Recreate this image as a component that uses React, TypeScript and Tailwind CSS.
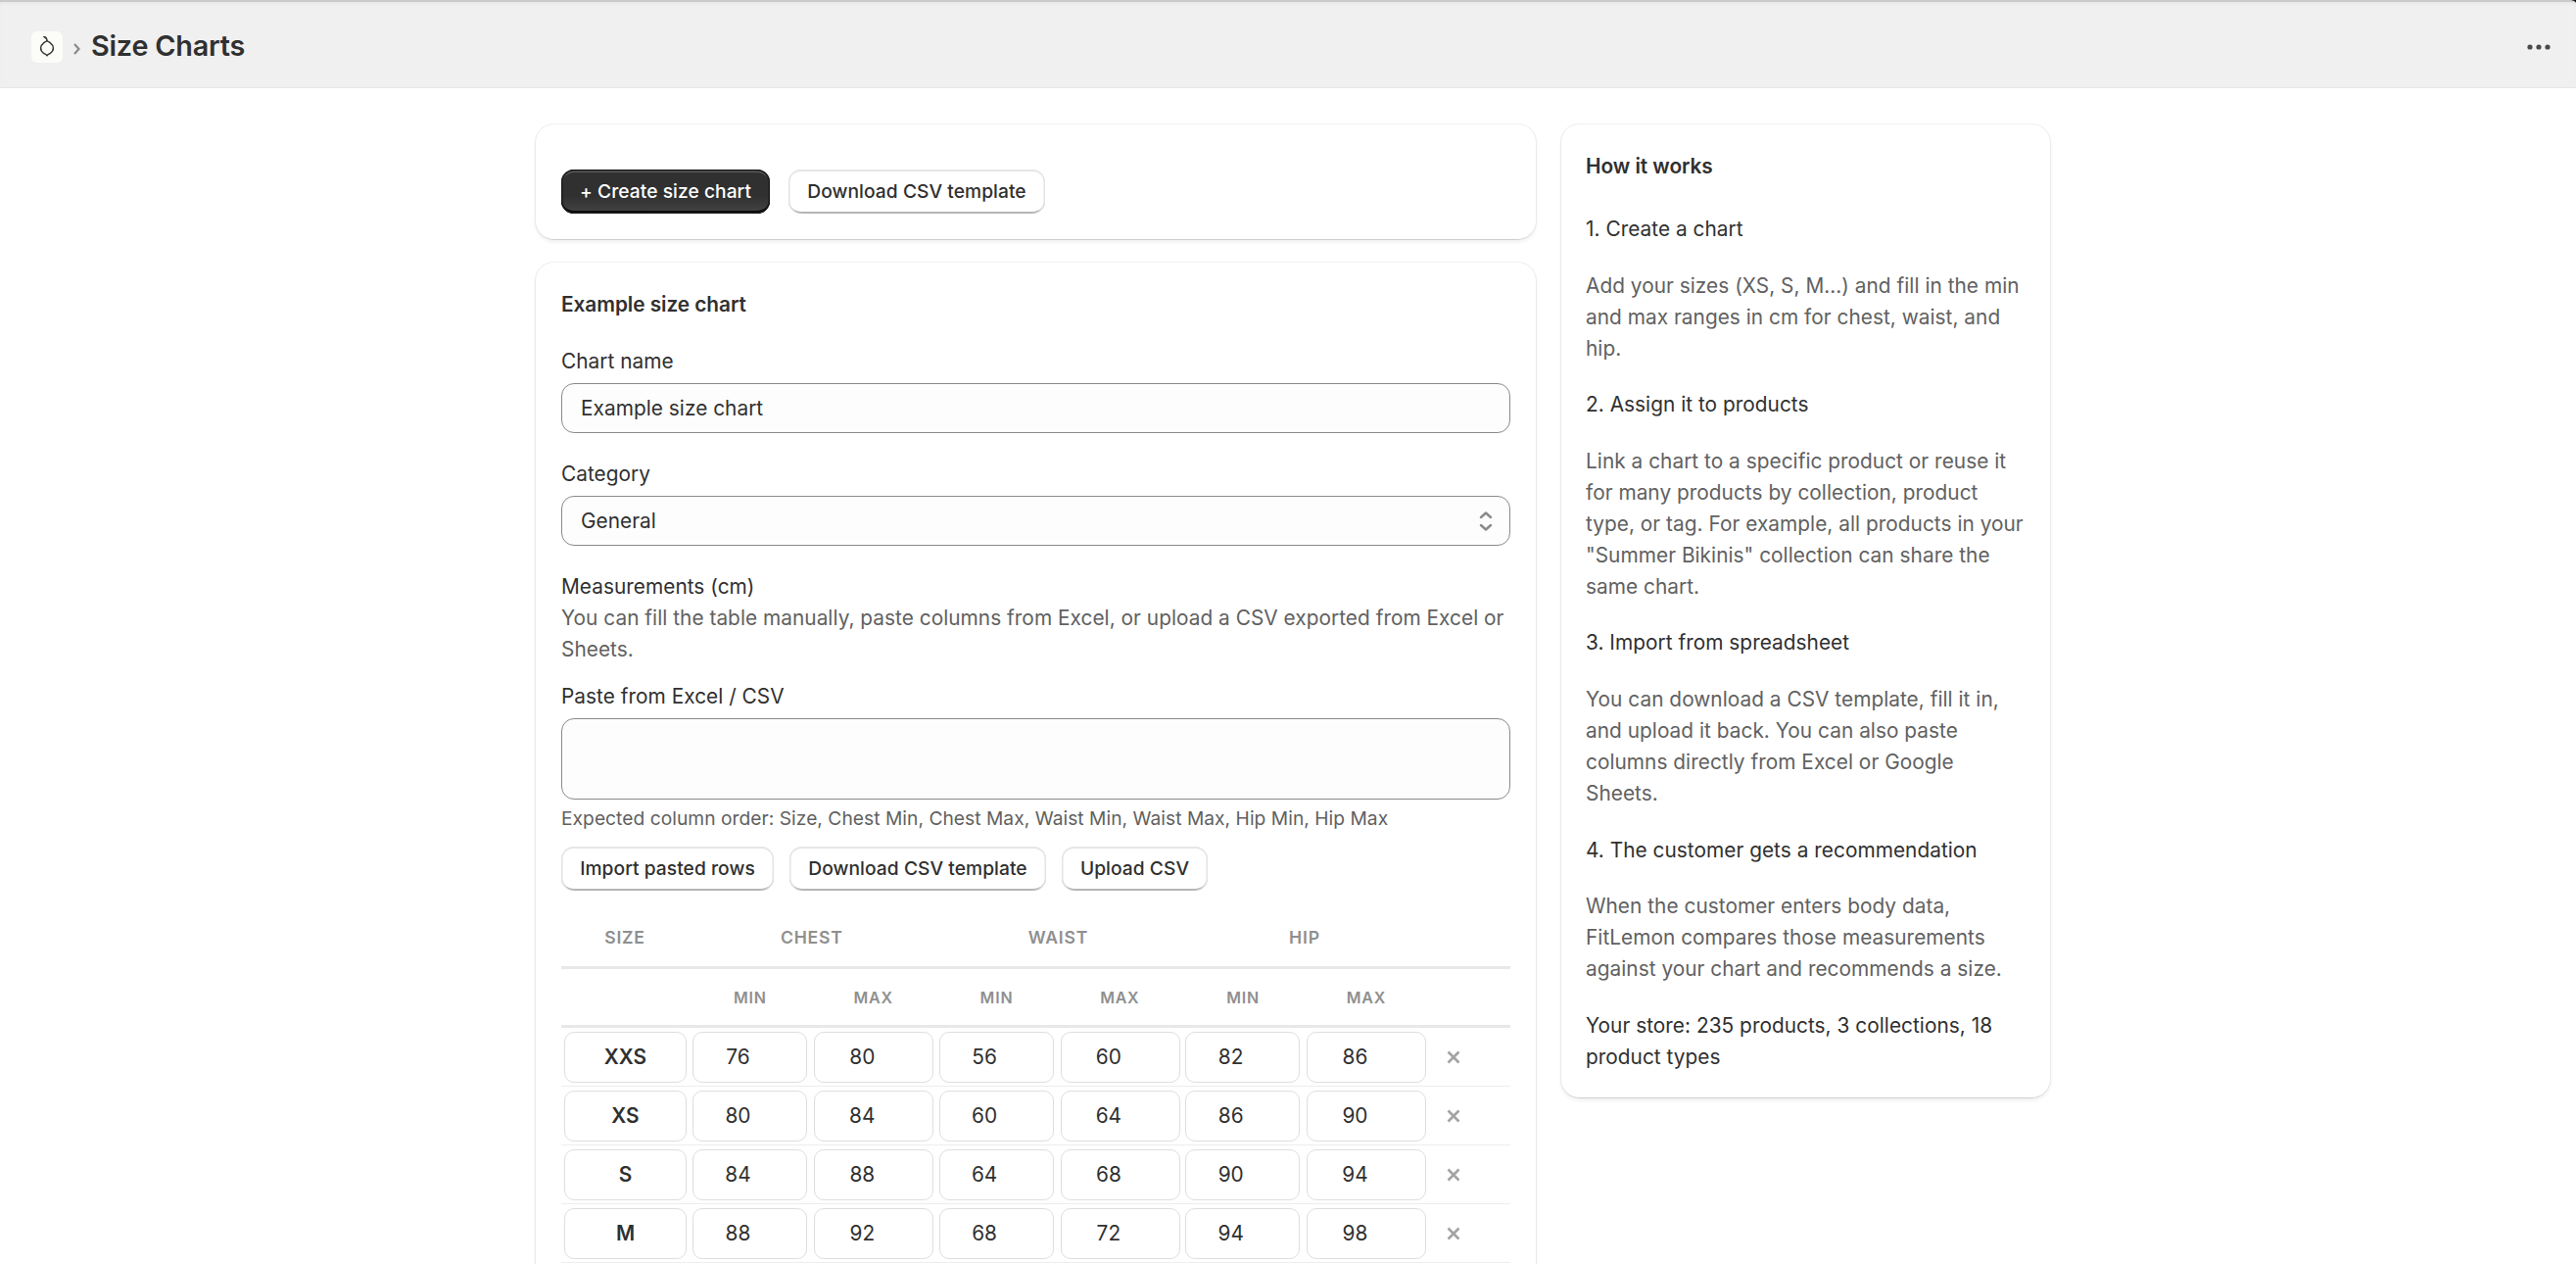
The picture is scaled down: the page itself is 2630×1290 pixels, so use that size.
import { useState } from 'react';
import type { ReactNode } from 'react';

const STEPS = [
    {
        title: '1. Create a chart',
        body: 'Add your sizes (XS, S, M...) and fill in the min and max ranges in cm for chest, waist, and hip.',
    },
    {
        title: '2. Assign it to products',
        body: 'Link a chart to a specific product or reuse it for many products by collection, product type, or tag. For example, all products in your "Summer Bikinis" collection can share the same chart.',
    },
    {
        title: '3. Import from spreadsheet',
        body: 'You can download a CSV template, fill it in, and upload it back. You can also paste columns directly from Excel or Google Sheets.',
    },
    {
        title: '4. The customer gets a recommendation',
        body: 'When the customer enters body data, FitLemon compares those measurements against your chart and recommends a size.',
    },
];

type Row = { size: string; values: number[] };

// values: chest min/max, waist min/max, hip min/max
const INITIAL_ROWS: Row[] = [
    { size: 'XXS', values: [76, 80, 56, 60, 82, 86] },
    { size: 'XS', values: [80, 84, 60, 64, 86, 90] },
    { size: 'S', values: [84, 88, 64, 68, 90, 94] },
    { size: 'M', values: [88, 92, 68, 72, 94, 98] },
    { size: 'L', values: [92, 96, 72, 76, 98, 102] },
];

const GRID = 'grid grid-cols-[130px_repeat(6,125.8px)_1fr]';

function Card({ children, className = '' }: { children: ReactNode; className?: string }) {
    return (
        <section
            className={`rounded-[20px] bg-white shadow-[inset_0_1px_0_#f1f1f1,inset_1px_0_0_#ebebeb,inset_-1px_0_0_#ebebeb,inset_0_-1px_0_#cfcfcf,0_3px_4px_-1px_rgba(26,26,26,0.07)] ${className}`}
        >
            {children}
        </section>
    );
}

function Button({ children, primary, className = '' }: { children: ReactNode; primary?: boolean; className?: string }) {
    const look = primary
        ? 'text-white bg-[linear-gradient(#303030_60%,#454545)] shadow-[inset_0_0_0_1.5px_#1a1a1a,inset_0_-3px_0_#0b0b0b,inset_0_3px_0_#5c5c5c]'
        : 'text-[#303030] bg-white shadow-[inset_0_2px_0_#e6e6e6,inset_1.5px_0_0_#e3e3e3,inset_-1.5px_0_0_#e3e3e3,inset_0_-2px_0_#b5b5b5]';
    return (
        <button type="button" className={`h-[45px] rounded-[13px] pb-px text-[19.2px] font-medium tracking-[0.06px] ${look} ${className}`}>
            {children}
        </button>
    );
}

function LemonLogo() {
    return (
        <svg viewBox="0 0 32 32" className="size-8" fill="none" stroke="#3a3a3a" strokeWidth="1.5" strokeLinecap="round" strokeLinejoin="round">
            <path d="M16 9.4c-1 1.2-2.2 1.5-3.4 2.4-2 1.5-3 3.2-3 5.2s1 3.8 3 5.3c1.2.8 2.5 1.2 3.4 2.5.9-1.3 2.2-1.7 3.4-2.5 2-1.5 3-3.3 3-5.3s-1-3.7-3-5.2c-1.2-.9-2.4-1.2-3.4-2.4z" />
            <path d="M16 9.2c0-1.2-.5-1.9-1.3-2.5" />
            <path d="M12.6 5.5c1.3-.4 2.5.1 3 1.5-1.3.3-2.4-.1-3-1.5z" fill="#3a3a3a" strokeWidth="0.8" />
        </svg>
    );
}

function TopBar() {
    return (
        <header className="relative flex h-[90px] items-center border-b border-[#e6e6e6] bg-[#f0f0f0] pl-8 pr-[26px] pt-[7px] shadow-[inset_0_2px_0_#cbcbcb,inset_0_5px_4px_-2px_#e2e2e2]">
            <span className="flex size-8 items-center justify-center rounded-[6px] bg-[#fcfcf9]">
                <LemonLogo />
            </span>
            <svg viewBox="0 0 8 12" className="ml-[11px] mt-[3px] h-3 w-2" fill="none" stroke="#8a8a8a" strokeWidth="2.2">
                <path d="M1 1l4.5 5L1 11" />
            </svg>
            <h1 className="mb-[3px] ml-[10px] text-[28.8px] font-semibold leading-8 tracking-[-0.2px]">Size Charts</h1>
            <button type="button" aria-label="More actions" className="ml-auto">
                <svg viewBox="0 0 24 8" className="h-2 w-6" fill="#4a4a4a">
                    <circle cx="3" cy="4" r="2.6" />
                    <circle cx="12" cy="4" r="2.6" />
                    <circle cx="21" cy="4" r="2.6" />
                </svg>
            </button>
            {/* rounded corner of the frame */}
            <svg viewBox="0 0 5 3" className="absolute right-0 top-0 h-[3px] w-[5px]" fill="#111">
                <path d="M0 0h5v3C4.5 1.5 2.5.3 0 0z" />
            </svg>
        </header>
    );
}

function SizeTable() {
    const [rows, setRows] = useState(INITIAL_ROWS);

    return (
        <div className="mt-[17px]">
            <div className={`${GRID} h-[63px] items-center border-b-[3px] border-[#e8e8e8] pt-px text-center text-[17.6px] font-semibold tracking-[0.8px] text-[#8f8f8f]`}>
                <span>SIZE</span>
                <span className="col-span-2">CHEST</span>
                <span className="col-span-2">WAIST</span>
                <span className="col-span-2">HIP</span>
            </div>
            <div className={`${GRID} h-[60px] items-center border-b-[3px] border-[#e8e8e8] text-center text-[16px] font-semibold tracking-[0.8px] text-[#8f8f8f]`}>
                <span />
                {['chest', 'waist', 'hip'].map((part) => (
                    <div key={part} className="col-span-2 grid grid-cols-2">
                        <span>MIN</span>
                        <span>MAX</span>
                    </div>
                ))}
            </div>
            {rows.map((row) => (
                <div key={row.size} className={`${GRID} h-[60px] items-center border-b border-[#ededed]`}>
                    <input
                        readOnly
                        value={row.size}
                        className="ml-[3px] h-[52px] w-[125px] rounded-[10px] border border-[#dedede] text-center font-semibold"
                    />
                    {row.values.map((value, i) => (
                        <input
                            key={i}
                            readOnly
                            value={value}
                            className={`h-[52px] rounded-[10px] border border-[#dedede] pr-6 text-center ${i % 2 ? 'ml-[2.5px] w-[122px]' : 'ml-1 w-[117px]'}`}
                        />
                    ))}
                    <button
                        type="button"
                        aria-label={`Remove ${row.size}`}
                        className="ml-[18px] flex size-4"
                        onClick={() => setRows(rows.filter((r) => r.size !== row.size))}
                    >
                        <svg viewBox="0 0 16 16" className="size-4" stroke="#a3a3a3" strokeWidth="2.6">
                            <path d="M2.5 2.5l11 11M13.5 2.5l-11 11" />
                        </svg>
                    </button>
                </div>
            ))}
        </div>
    );
}

function ChartForm() {
    return (
        <Card className="h-[1100px] px-[27px] pt-[28px]">
            <h2 className="font-semibold tracking-[-0.04px]">Example size chart</h2>

            <label className="mt-[26px] block">Chart name</label>
            <input
                readOnly
                value="Example size chart"
                className="mt-[6px] block h-[51px] w-full rounded-[13px] border border-[#8a8a8a] bg-[#fdfdfd] px-[19px]"
            />

            <label className="mt-[26px] block">Category</label>
            <div className="mt-[6px] flex h-[51px] items-center justify-between rounded-[13px] border border-[#8a8a8a] bg-[#fdfdfd] pl-[19px] pr-[17px]">
                <span>General</span>
                <svg viewBox="0 0 14 20" className="h-5 w-[14px]" fill="none" stroke="#8a8a8a" strokeWidth="2.4" strokeLinecap="round" strokeLinejoin="round">
                    <path d="M2 6l5-4.5L12 6M2 14l5 4.5L12 14" />
                </svg>
            </div>

            <p className="mt-[26px]">Measurements (cm)</p>
            <p className="text-[#616161]">
                You can fill the table manually, paste columns from Excel, or upload a CSV exported from Excel or Sheets.
            </p>

            <label className="mt-4 block">Paste from Excel / CSV</label>
            <textarea
                readOnly
                className="mt-[6px] block h-[83px] w-full resize-none rounded-[13px] border border-[#8a8a8a] bg-[#fdfdfd]"
            />
            <p className="mt-[6px] text-[19.2px] leading-[26px] text-[#616161]">
                Expected column order: Size, Chest Min, Chest Max, Waist Min, Waist Max, Hip Min, Hip Max
            </p>

            <div className="mt-4 flex gap-4">
                <Button className="w-[217px]">Import pasted rows</Button>
                <Button className="w-[262px]">Download CSV template</Button>
                <Button className="w-[149px]">Upload CSV</Button>
            </div>

            <SizeTable />
        </Card>
    );
}

function HowItWorks() {
    return (
        <Card className="w-[501px] shrink-0 self-start px-[26px] pb-[26px] pt-[28px]">
            <h2 className="mb-8 font-semibold tracking-[-0.04px]">How it works</h2>
            <div className="flex flex-col gap-[25.6px]">
                {STEPS.map((step) => (
                    <div key={step.title} className="flex flex-col gap-[25.6px]">
                        <h3>{step.title}</h3>
                        <p className="text-[#616161]">{step.body}</p>
                    </div>
                ))}
                <p>Your store: 235 products, 3 collections, 18 product types</p>
            </div>
        </Card>
    );
}

export default function App() {
    return (
        <div className="h-[1290px] overflow-hidden bg-white font-['Inter',sans-serif] text-[20.8px] font-normal leading-8 tracking-[0.04px] text-[#303030]">
            <TopBar />
            <main className="ml-[546px] flex w-[1548px] gap-6 pt-[36px]">
                <div className="flex min-w-0 flex-1 flex-col gap-[22px]">
                    <Card className="h-[119px] px-[27px] pt-[47px]">
                        <div className="flex gap-[19px]">
                            <Button primary className="w-[213px]">+ Create size chart</Button>
                            <Button className="w-[262px]">Download CSV template</Button>
                        </div>
                    </Card>
                    <ChartForm />
                </div>
                <HowItWorks />
            </main>
        </div>
    );
}
